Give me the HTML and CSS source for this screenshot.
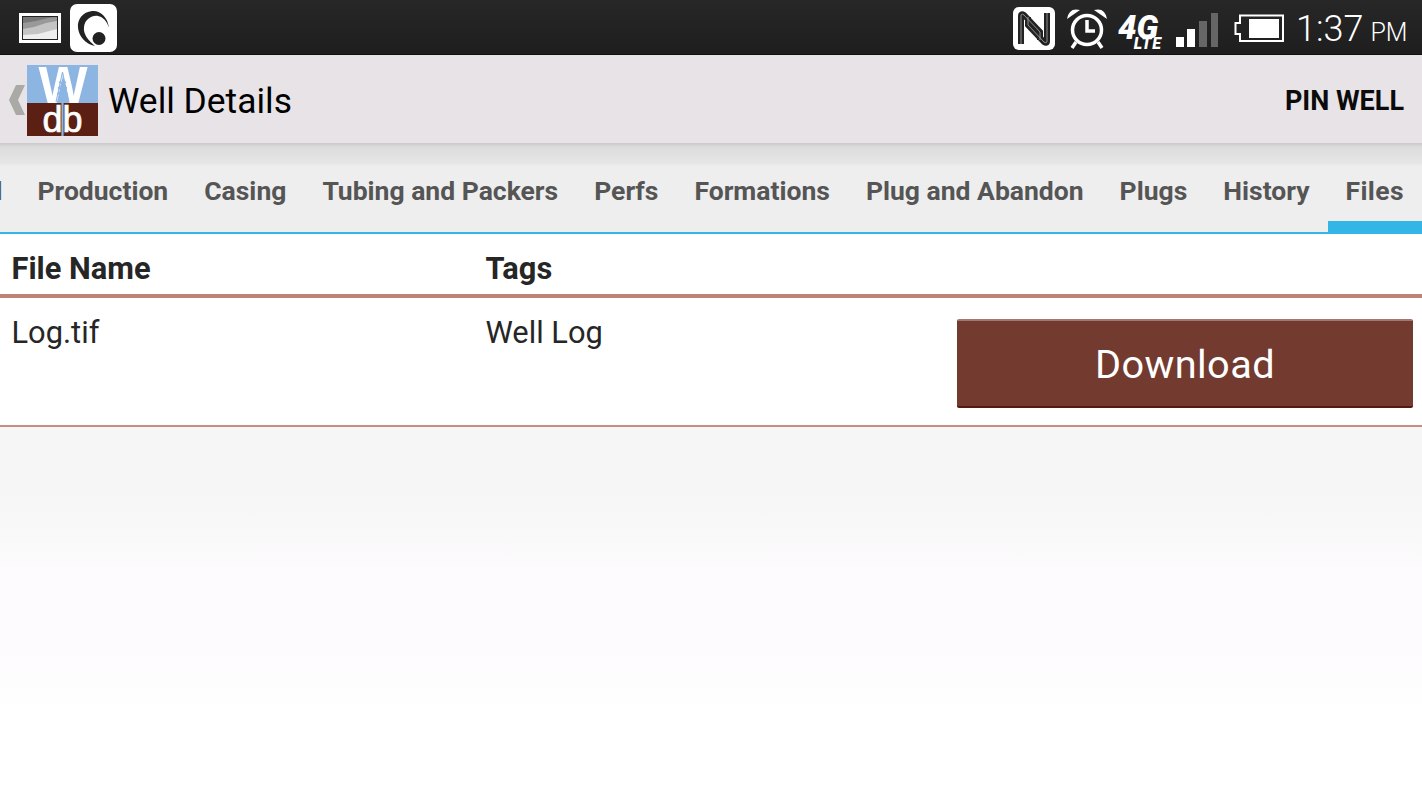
FILE: index.html
```html
<!DOCTYPE html>
<html lang="en">
<head>
<meta charset="utf-8">
<title>Well Details</title>
<link rel="stylesheet" href="styles.css">
</head>
<body>
<div class="status">
  <div class="status-left">
    <svg class="ic-map" width="44" height="32" viewBox="0 0 44 32">
      <rect x="1" y="1" width="42" height="30" fill="#fff"/>
      <rect x="4" y="4" width="36" height="24" fill="#222"/>
      <rect x="5" y="5" width="34" height="22" fill="#777"/>
      <path d="M5 11 L18 9 L30 6 L39 5 V27 H5Z" fill="#999"/>
      <path d="M5 17 L16 15 L28 11 L39 9 V27 H5Z" fill="#c4c4c4"/>
      <path d="M5 23 L20 22 L39 17 V27 H5Z" fill="#eee"/>
    </svg>
    <svg class="ic-app" width="47" height="48" viewBox="0 0 47 48">
      <rect x="0" y="0" width="47" height="48" rx="7" fill="#fff"/>
      <path d="M39 24 C38 13 30 6 22 7 C13 8 7 15 8 24 C9 32 15 40 25 42 C18 36 13 30 14 23 C15 15 22 11 28 12 C33 13 37 17 39 24Z" fill="#222"/>
      <circle cx="29" cy="34.500" r="6.500" fill="#222"/>
    </svg>
  </div>
  <div class="status-right">
    <svg class="ic-nfc" width="42" height="43" viewBox="0 0 42 43">
      <rect width="42" height="43" rx="6" fill="#fff"/>
      <path d="M8 37 V9 Q8 6 11 8 L27 25 V33" fill="none" stroke="#222" stroke-width="6"/>
      <path d="M34 6 V34 Q34 37 31 35 L15 18 V10" fill="none" stroke="#222" stroke-width="6"/>
      <path d="M8 37 V9 Q8 6 11 8 L27 25 V33 M34 6 V34 Q34 37 31 35 L15 18 V10" fill="none" stroke="#aaa" stroke-width="0.800"/>
    </svg>
    <svg class="ic-alarm" width="42" height="42" viewBox="0 0 42 42">
      <circle cx="21" cy="23" r="14.500" fill="none" stroke="#fff" stroke-width="3.500"/>
      <path d="M21 13 V24 H29" fill="none" stroke="#fff" stroke-width="3.500"/>
      <path d="M1 12 Q3 0 14 3 Z M41 12 Q39 0 28 3 Z" fill="#fff"/>
      <path d="M10 35 L6 41 M32 35 L36 41" stroke="#fff" stroke-width="3.500"/>
    </svg>
    <div class="net"><span class="net-g">4G</span><span class="net-l">LTE</span></div>
    <svg class="ic-signal" width="44" height="34" viewBox="0 0 44 34">
      <rect x="0" y="24" width="8" height="10" fill="#fff"/>
      <rect x="11" y="16" width="8" height="18" fill="#fff"/>
      <rect x="23" y="8" width="8" height="26" fill="#666"/>
      <rect x="35" y="0" width="7" height="34" fill="#666"/>
    </svg>
    <svg class="ic-batt" width="50" height="28" viewBox="0 0 50 28">
      <path d="M6 1.500 H49 V27 H6 V20 H1.500 V9 H6 Z" fill="none" stroke="#fff" stroke-width="2"/>
      <rect x="15" y="5" width="30" height="19" fill="#fff"/>
    </svg>
    <div class="clock"><span class="clock-t">1:37</span><span class="clock-p">PM</span></div>
  </div>
</div>

<header class="bar">
  <svg class="chev" width="27" height="32" viewBox="0 0 27 32">
    <path d="M16 1 H25 L18 16 L25 31 H16 L9 16 Z" fill="#a9aaa6"/>
  </svg>
  <svg class="logo" width="71" height="71" viewBox="0 0 71 71">
    <rect width="71" height="38" fill="#8cb5e2"/>
    <rect y="38" width="71" height="33" fill="#5b2013"/>
    <text class="logo-w" x="36" y="38" text-anchor="middle">W</text>
    <text class="logo-db" x="35.500" y="67" text-anchor="middle">db</text>
    <path d="M35.500 20 V71" stroke="#8cb5e2" stroke-width="2.200"/>
    <path d="M35.500 7 L29 37 M35.500 7 L42 37 M32 17 H39 M31 23 H40 M30 29 H41 M32 17 L40 23 M39 17 L31 23 M31 23 L41 29 M40 23 L30 29" stroke="#8cb5e2" stroke-width="1.100" fill="none"/>
  </svg>
  <h1 class="title">Well Details</h1>
  <span class="action">PIN WELL</span>
</header>

<nav class="tabs">
  <span class="tab tab-cut">Well</span>
  <span class="tab">Production</span>
  <span class="tab">Casing</span>
  <span class="tab">Tubing and Packers</span>
  <span class="tab">Perfs</span>
  <span class="tab">Formations</span>
  <span class="tab">Plug and Abandon</span>
  <span class="tab">Plugs</span>
  <span class="tab">History</span>
  <span class="tab tab-on">Files</span>
</nav>

<main class="content">
  <div class="row head">
    <div class="c-name">File Name</div>
    <div class="c-tags">Tags</div>
  </div>
  <div class="row item">
    <div class="c-name">Log.tif</div>
    <div class="c-tags">Well Log</div>
    <button class="dl">Download</button>
  </div>
</main>
<div class="rest"></div>
</body>
</html>
```

FILE: styles.css
```css
* { box-sizing: border-box; }
html, body { margin: 0; padding: 0; }
body {
  width: 1422px;
  height: 800px;
  overflow: hidden;
  display: flex;
  flex-direction: column;
  font-family: Roboto, "Liberation Sans", sans-serif;
  background: #fff;
}
.status {
  height: 55px;
  flex: none;
  background: linear-gradient(#272727, #1e1e1e);
  border-bottom: 1px solid #111;
  display: flex;
  align-items: center;
  justify-content: space-between;
  color: #fff;
}
.status-left { display: flex; align-items: center; margin-left: 18px; margin-top: 1px; }
.ic-map { margin-right: 8px; }
.status-right { display: flex; align-items: center; }
.ic-nfc { margin-right: 11px; margin-top: 2px; }
.ic-alarm { margin-right: 9px; margin-top: 2px; }
.ic-signal { margin-right: 14px; margin-top: 5px; }
.ic-batt { margin-right: 12px; margin-top: 2px; }
.net { width: 48px; margin-right: 11px; height: 33px; margin-top: 13px; display: flex; flex-direction: column; font-style: italic; font-weight: 900; }
.net-g { font-size: 33px; height: 22px; line-height: 22px; margin-left: 1px; letter-spacing: 0; }
.net-l { font-size: 16px; height: 11px; line-height: 11px; margin-top: -1px; text-align: right; padding-right: 3px; letter-spacing: 1px; }
.clock { display: flex; align-items: baseline; margin-right: 14px; width: 112px; margin-top: 3px; }
.clock-t { font-size: 36px; font-weight: 300; }
.clock-p { font-size: 25px; font-weight: 300; margin-left: 7px; }

.bar {
  height: 88px;
  flex: none;
  background: #e7e3e7;
  display: flex;
  align-items: center;
  color: #000;
}
.chev { display: block; flex: none; margin-top: 1px; }
.logo { display: block; margin-top: 2px; flex: none; }
.logo-w { font-family: "Liberation Sans", sans-serif; font-size: 52px; font-weight: 700; fill: #fff; }
.logo-db { font-family: "Liberation Sans", sans-serif; font-size: 36px; fill: #fff; stroke: #fff; stroke-width: 0.700px; }
.title { margin: 4px 0 0 10px; font-size: 35.400px; font-weight: 400; flex: 1; }
.action { font-size: 27px; font-weight: 700; margin: 4px 18px 0 0; color: #0b0b0b; }

.tabs {
  height: 91px;
  flex: none;
  display: flex;
  justify-content: flex-end;
  overflow: hidden;
  border-bottom: 2px solid #33b5e5;
  background: linear-gradient(#c9c9c9 0, #dcdcdc 4px, #e6e6e6 20px, #eeeeee 23px, #eeeeee 100%);
}
.tab {
  flex: none;
  height: 89px;
  padding: 32px 18px 0;
  font-size: 26.500px;
  font-weight: 700;
  line-height: 32px;
  color: #555;
  white-space: nowrap;
}
.tab-cut { padding-right: 17px; }
.tab-on { border-bottom: 11px solid #33b5e5; letter-spacing: 0.400px; }

.content { flex: none; background: #fff; }
.row { display: flex; position: relative; padding-left: 11.500px; color: #262626; }
.c-name { width: 474px; flex: none; }
.c-tags { flex: 1; }
.head {
  height: 64px;
  font-size: 30.800px;
  font-weight: 700;
  border-bottom: 4px solid #be8375;
  padding-top: 17px;
  line-height: 36px;
}
.item {
  height: 129px;
  font-size: 30.800px;
  line-height: 36px;
  padding-top: 17px;
  border-bottom: 2px solid #c88d7f;
}
.dl {
  width: 456px;
  height: 89px;
  margin: 4px 9px 0 0;
  flex: none;
  background: #733a2f;
  border: none;
  border-top: 2px solid #a07a72;
  border-bottom: 2px solid #55190f;
  border-radius: 2px;
  color: #fff;
  font-family: Roboto, sans-serif;
  font-size: 39.700px;
  font-weight: 400;
  letter-spacing: 0.400px;
  padding: 2px 0 0;
}
.rest {
  flex: 1;
  background: linear-gradient(#f6f6f6 0, #f6f6f6 65px, #fdfbfd 150px, #fdfbfd 220px, #fff 290px);
}
```
